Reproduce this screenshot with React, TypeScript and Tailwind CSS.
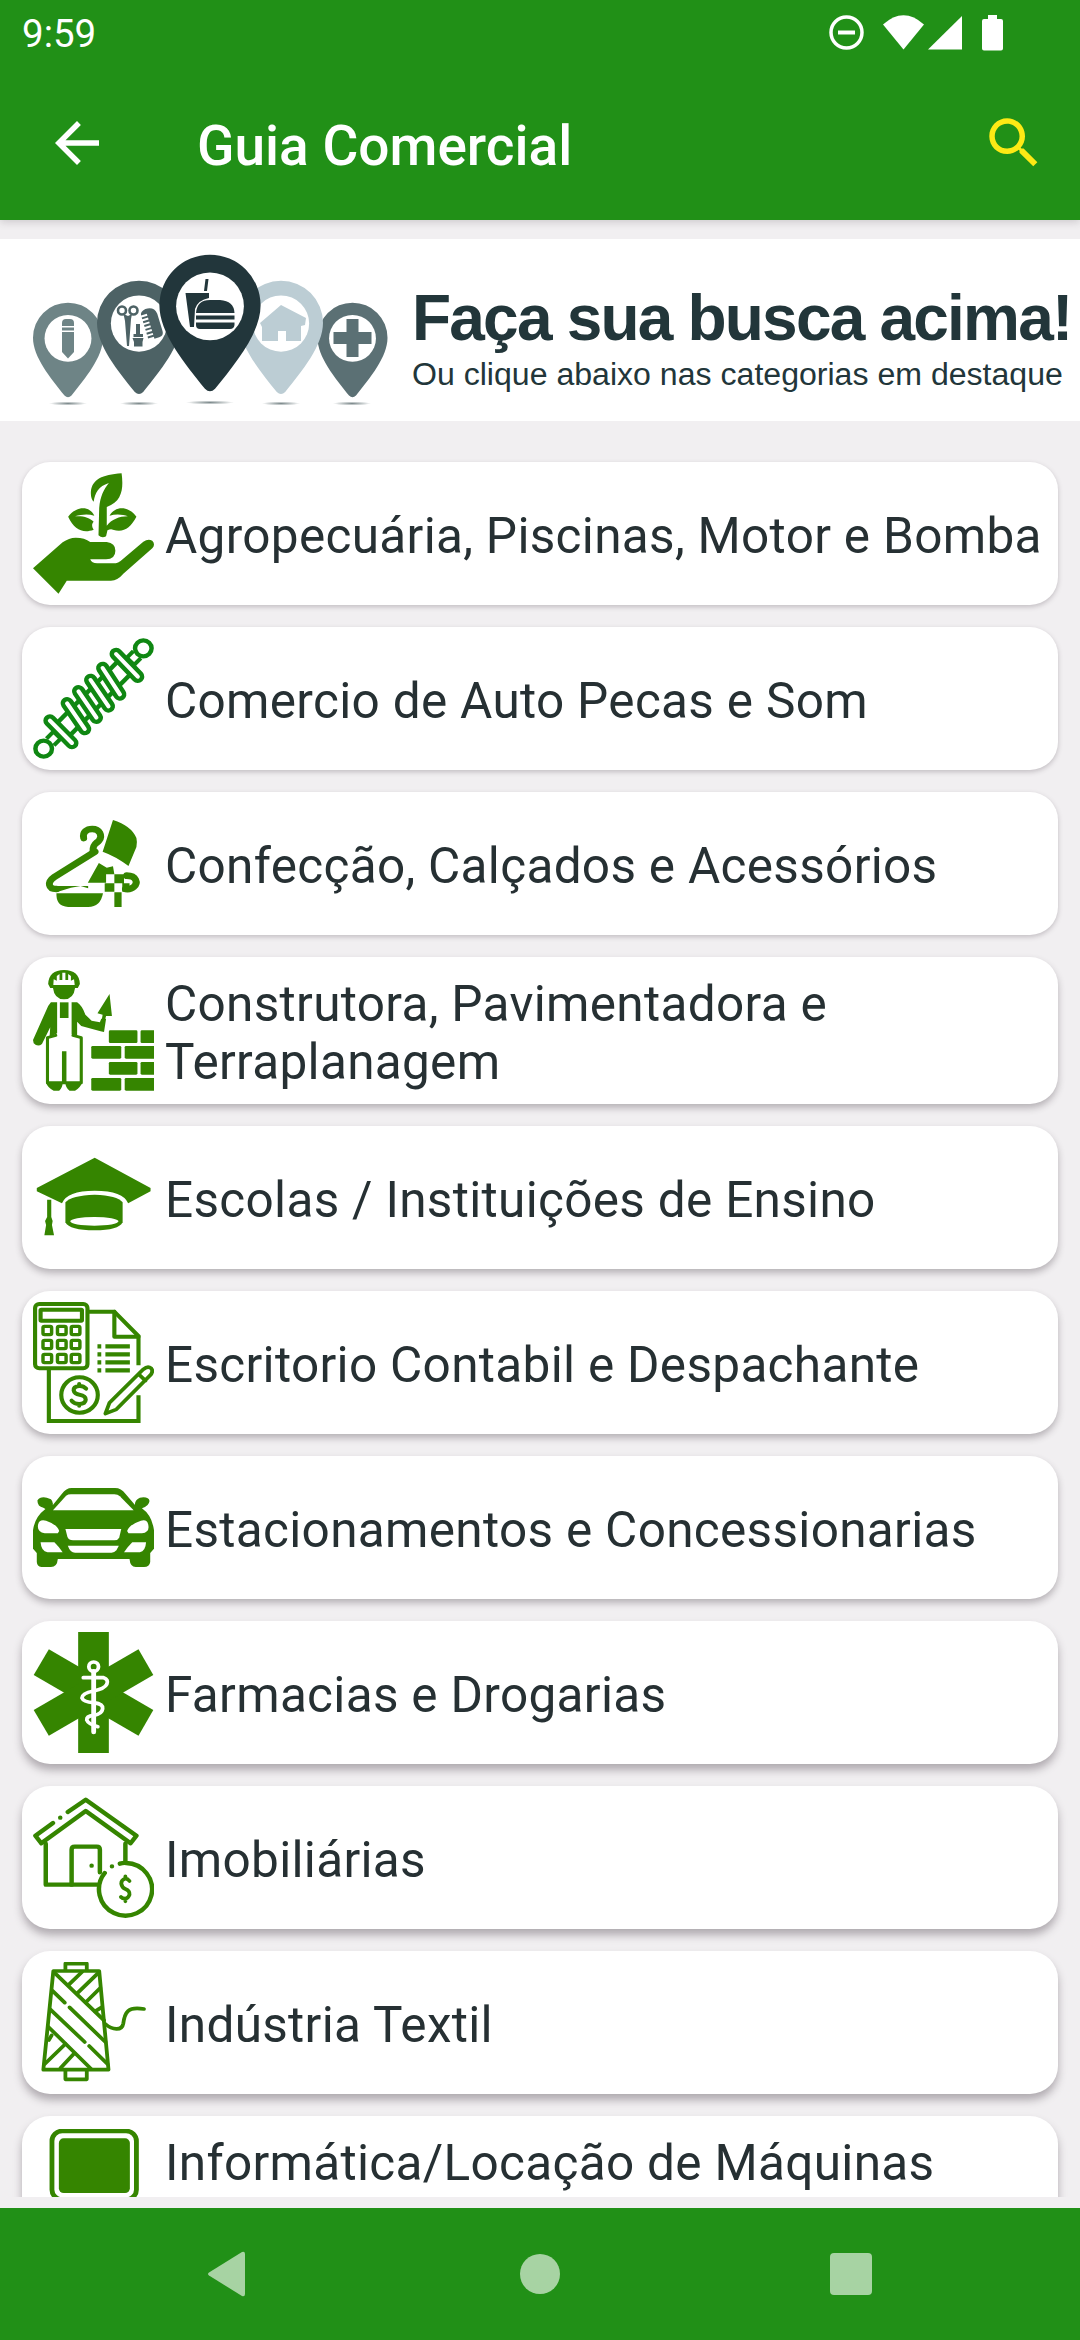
import type { ReactNode } from 'react';

interface Category {
  name: string;
  icon: ReactNode;
  twoLines?: boolean;
  shadow: string;
}

const SHADOW_SM = 'shadow-[0_2px_5px_rgba(60,50,60,0.26)]';
const SHADOW_MD = 'shadow-[0_4px_7px_rgba(60,50,60,0.32)]';
const SHADOW_LG = 'shadow-[0_6px_9px_rgba(60,50,60,0.36)]';

function Icon({ children }: { children: ReactNode }) {
  return (
    <svg
      className="size-[121px] shrink-0 text-[#358500]"
      viewBox="0 0 351 363"
      preserveAspectRatio="none"
      fill="currentColor"
      strokeLinecap="round"
      strokeLinejoin="round"
    >
      {children}
    </svg>
  );
}

const HandPlant = () => (
  <Icon>
    <path d="M0 286 86 208Q104 194 124 194 150 194 166 207H214Q239 210 239 233 239 258 212 259H166Q170 271 186 271H240Q247 270 254 264L320 206Q334 196 346 203 356 214 346 226L262 302Q246 322 226 323H98L74 362Z" />
    <path d="M257 1C200 5 172 20 168 55 167 70 170 80 176 86 180 60 190 40 220 30 205 50 195 70 192 105L190 187Q200 197 212 190L216 172Q226 166 232 170C262 180 282 165 300 131 278 98 238 97 222 128 240 122 262 124 275 130 250 130 228 140 214 158V102C262 85 262 40 257 1Z" />
    <path d="M102 131C125 98 165 97 178 128 160 122 140 124 122 130 145 128 165 134 176 146 170 152 170 160 176 170 145 182 120 170 102 131Z" />
  </Icon>
);

const COILS = [
  'M241 48 304 116',
  'M202 90 252 169',
  'M167 126 219 205',
  'M132 160 184 239',
  'M99 196 150 273',
  'M49 248 113 315',
];

const ShockAbsorber = () => (
  <Icon>
    <g fill="none" className="stroke-[#0f8712]">
      <path d="M50 312 302 50" strokeWidth="42" strokeLinecap="butt" />
      <path d="M50 312 302 50" strokeWidth="18" stroke="#fff" strokeLinecap="butt" />
      <path d="M92 270 262 92" strokeWidth="66" strokeLinecap="butt" />
      <path d="M92 270 262 92" strokeWidth="40" stroke="#fff" strokeLinecap="butt" />
      <path d="M275 62 290 77M62 284 77 299" strokeWidth="11" />
      {COILS.map((d) => (
        <g key={d}>
          <path d={d} strokeWidth="38" />
          <path d={d} strokeWidth="12" className="stroke-white" />
        </g>
      ))}
      <circle cx="320" cy="31" r="24" strokeWidth="13" fill="#fff" />
      <circle cx="31" cy="332" r="24" strokeWidth="13" fill="#fff" />
    </g>
  </Icon>
);

const Clothes = () => (
  <Icon>
    <g fill="none" stroke="currentColor" strokeWidth="20">
      <path d="M147 105C143 88 155 78 172 78 194 78 202 98 192 112 185 122 172 122 174 146" />
      <path d="M180 146 62 222C40 238 44 258 68 258" />
      <path d="M272 218C300 218 306 240 292 252Q284 260 268 258" />
    </g>
    <path d="M68 249H160V256L138 249 110 254 70 267Z" />
    <path d="M232 51Q285 68 300 105 303 118 300 132L277 189Q240 160 202 146Z" />
    <path d="M191 180 214 194 232 190 236 214H212V239H159Z" />
    <path d="M236 214H264V241H236ZM208 241H236V266H208ZM259 241H280V266H259ZM236 268H257V312H236Z" />
    <path d="M68 271H203Q196 312 160 312H102Q66 310 68 271Z" />
  </Icon>
);

const Builder = () => (
  <Icon>
    <path d="M44 42Q46 0 90 0 134 0 136 42L130 54H122Q118 88 90 88 62 88 58 54H50Z" />
    <path d="M59 45 60 28 69 32V18L77 12V30H85V8H94V30H102V12L110 18V32L119 28 121 45Z" fill="#fff" />
    <path d="M52 97H70V190L48 202 50 172 26 222Q14 232 2 220L0 210 44 108Z" />
    <path d="M112 97H128Q142 106 152 134L170 152 194 157 198 146H212L206 186 196 184 140 168 128 155V200L112 192Z" />
    <path d="M78 97H103V144H78Z" />
    <path d="M222 72 229 138 212 138 206 160 198 158 202 134 187 130Z" />
    <path d="M66 196 42 203V338H140V203L116 196" fill="none" stroke="currentColor" strokeWidth="9" />
    <path d="M84 244H97V338H84ZM38 338H86Q86 352 76 362H60Q42 352 38 338ZM94 338H142Q138 352 122 362H106Q94 352 94 338Z" />
    {[181, 276].map((y) => (
      <g key={y}>
        <rect x="220" y={y} width="83" height="38" rx="4" />
        <path d={`M316 ${y}h35v38h-35q-4 0-4-4v-30q0-4 4-4z`} />
      </g>
    ))}
    {[228, 324].map((y) => (
      <g key={y}>
        <rect x="169" y={y} width="87" height="38" rx="4" />
        <path d={`M270 ${y}h81v38h-81q-4 0-4-4v-30q0-4 4-4z`} />
      </g>
    ))}
  </Icon>
);

const GraduationCap = () => (
  <Icon>
    <path d="M179 62 341 153V163L276 199Q262 161 179 161 98 161 84 199L11 163V153Z" />
    <path d="M94 196Q112 175 179 173 244 175 260 196V256Q248 280 179 280 106 280 94 256Z" />
    <ellipse cx="178" cy="253" rx="70" ry="13" fill="#fff" />
    <path d="M41 188H53V240L57 252 55 264 61 295H33L38 264 35 252 41 240Z" />
  </Icon>
);

const Accounting = () => (
  <Icon>
    <g fill="none" stroke="currentColor" strokeWidth="12">
      <rect x="6" y="6" width="152" height="193" rx="12" />
      <rect x="22" y="23" width="120" height="33" rx="2" />
      <path d="M160 29H236L306 102V190M46 200V357H306V280" strokeLinecap="butt" strokeLinejoin="miter" />
      <path d="M236 29V104H306" />
      <circle cx="135" cy="279" r="53" />
      <path d="M154 260Q146 251 134 252 117 254 118 265 120 276 135 278 153 281 153 293 152 306 134 306 120 306 112 296M134 246V252M134 306V311" />
      <path d="M210 335 222 302 320 202Q333 190 343 199 350 208 340 220L242 322ZM306 216 326 236" strokeWidth="11" />
      {[85, 127, 169].map((y) =>
        [41, 83, 123].map((x) => (
          <rect key={`${x}-${y}`} x={x - 12} y={y - 12} width="25" height="25" rx="4" strokeWidth="10" />
        )),
      )}
      {[133, 157, 181, 205].map((y) => (
        <path key={y} d={`M187 ${y}h11M210 ${y}h71`} strokeLinecap="butt" strokeWidth="13" />
      ))}
    </g>
  </Icon>
);

const Car = () => (
  <Icon>
    <path d="M0 190Q5 150 36 126L30 122Q12 118 13 100 20 88 40 92L52 97Q60 106 57 115L84 80Q96 63 112 63H238Q256 63 268 80L296 114Q294 100 310 92 336 88 338 102 336 118 316 124 345 145 351 190V245L340 258V285Q338 300 322 300H298Q282 300 280 276H72Q70 300 52 300H24Q12 298 11 285V258L0 245Z" />
    <g fill="#fff">
      <path d="M58 130 96 86Q102 82 110 82H236Q246 82 252 88L292 130Z" />
      <path d="M15 172Q18 156 38 161 70 172 76 192L72 199H34Q10 195 15 172Z" />
      <path d="M334 172Q331 156 313 161 280 172 273 192L277 199H316Q340 195 334 172Z" />
      <path d="M94 186H256L250 212Q246 220 236 220H116Q104 220 100 210Z" />
      <path d="M101 236H249L242 250Q236 257 228 257H122Q108 257 101 236Z" />
      <path d="M22 226H62Q76 240 86 256H42Q24 254 22 226Z" />
      <path d="M328 226H288Q274 240 264 256H310Q326 254 328 226Z" />
    </g>
  </Icon>
);

const StarOfLife = () => (
  <Icon>
    <path d="M131 0H220V363H131Z" />
    <path d="M46 52 349 234 306 311 2 129Z" />
    <path d="M306 52 349 129 46 311 2 234Z" />
    <g fill="none" stroke="#fff" strokeWidth="11">
      <circle cx="176" cy="104" r="14" />
      <path d="M176 118V300" strokeWidth="14" />
      <path d="M146 137H205Q220 142 214 157 208 170 176 177 142 184 142 198 146 210 176 212 204 216 202 230 200 246 176 250 155 252 156 264 160 276 188 284" />
    </g>
  </Icon>
);

const RealEstate = () => (
  <Icon>
    <g fill="none" stroke="currentColor" strokeWidth="13">
      <path d="M101 45 153 8 300 116 283 139 153 42 24 139 7 116 58 78M79 62h.1" />
      <path d="M37 140V263H186M268 140V192" />
      <path d="M112 263V158Q112 149 121 149H185Q194 149 194 158V226" />
      <path d="M170 206h.1M229 208h.1" />
      <path d="M252 200Q262 197 270 198A77 79 0 1 1 208 228" />
      <path d="M280 252Q274 244 267 245 256 248 256 260 258 272 268 276 281 281 280 293 276 304 268 305 259 305 255 300M268 238V245M268 306V313" strokeWidth="11" />
    </g>
  </Icon>
);

const Spool = () => (
  <Icon>
    <g fill="none" stroke="currentColor" strokeWidth="11">
      <path d="M59 27H192L219 323H30ZM94 25V5H156V25M94 325V352H156V325" />
      <path d="M62 32 206 175M56 86 92 122M106 136 150 240" stroke="none" />
      <path d="M62 32 206 175M56 86 92 122M106 136 210 240M50 142 150 240M163 252 216 306M44 194 168 320" />
      <path d="M142 30 104 68M188 34 128 94M195 78 154 120M199 136 180 148M54 220 46 234M94 246 34 306M120 274 80 318" />
      <path d="M210 186C230 204 258 208 262 184 266 152 274 132 322 141" />
    </g>
  </Icon>
);

const Computer = () => (
  <Icon>
    <rect x="55" y="6" width="245" height="206" rx="30" fill="none" stroke="currentColor" strokeWidth="14" />
    <rect x="75" y="28" width="206" height="164" rx="14" />
  </Icon>
);

const categories: Category[] = [
  { name: 'Agropecuária, Piscinas, Motor e Bomba', icon: <HandPlant />, shadow: SHADOW_SM },
  { name: 'Comercio de Auto Pecas e Som', icon: <ShockAbsorber />, shadow: SHADOW_SM },
  { name: 'Confecção, Calçados e Acessórios', icon: <Clothes />, shadow: SHADOW_SM },
  { name: 'Construtora, Pavimentadora e Terraplanagem', icon: <Builder />, shadow: SHADOW_MD, twoLines: true },
  { name: 'Escolas / Instituições de Ensino', icon: <GraduationCap />, shadow: SHADOW_MD },
  { name: 'Escritorio Contabil e Despachante', icon: <Accounting />, shadow: SHADOW_MD },
  { name: 'Estacionamentos e Concessionarias', icon: <Car />, shadow: SHADOW_MD },
  { name: 'Farmacias e Drogarias', icon: <StarOfLife />, shadow: SHADOW_LG },
  { name: 'Imobiliárias', icon: <RealEstate />, shadow: SHADOW_LG },
  { name: 'Indústria Textil', icon: <Spool />, shadow: SHADOW_LG },
  { name: 'Informática/Locação de Máquinas', icon: <Computer />, shadow: SHADOW_LG, twoLines: true },
];

interface PinProps {
  x: number;
  top: number;
  r: number;
  color: string;
}

function Pin({ x, top, r, color }: PinProps) {
  return (
    <g transform={`translate(${x} ${top}) scale(${r})`}>
      <path d="M-1 1A1 1 0 0 1 1 1C1 1.55 .5 2.15 .1 2.65Q0 2.75-.1 2.65C-.5 2.15-1 1.55-1 1Z" fill={color} />
      <circle cx="0" cy="1.02" r=".67" fill="#fff" />
    </g>
  );
}

function BannerPins() {
  return (
    <svg className="h-[182px] w-[400px] shrink-0" viewBox="0 0 400 182">
      <defs>
        <radialGradient id="ground">
          <stop offset="0" stopColor="#7d8a8c" />
          <stop offset="1" stopColor="#fff" />
        </radialGradient>
      </defs>
      {[68, 139, 210, 281, 352].map((x, i) => (
        <ellipse key={x} cx={x} cy={i === 2 ? 163.5 : 164.5} rx={i === 2 ? 24 : 19} ry="2" fill="url(#ground)" />
      ))}
      <Pin x={68} top={63.7} r={35} color="#6e8486" />
      <Pin x={352.5} top={63.7} r={35} color="#5b7074" />
      <Pin x={139} top={41.7} r={42} color="#4d6265" />
      <Pin x={281} top={41.7} r={42} color="#bccdd4" />

      {/* pencil */}
      <path
        d="M62 84Q62 80 66 80H70Q74 80 74 84V87H62ZM62 88.500H74V91.500H62ZM62 93H74V113L68 119.500 62 113Z"
        fill="#6e8486"
      />

      {/* scissors, nail polish and comb */}
      <g fill="none" stroke="#4d6265" strokeWidth="2.6">
        <circle cx="122" cy="71.500" r="4" />
        <circle cx="133.500" cy="71.500" r="4" />
      </g>
      <g fill="#4d6265">
        <path d="M123.500 75 128 77 132 75 131 80 129 107H127L125 82ZM136 85H140V95H143V98H133.500V95H136ZM132.500 99H143.500L142.500 103H134ZM134 103H142.500V107.500H134Z" />
        <g transform="rotate(-17 151 85)">
          <path d="M150 69Q159 69 160 77V95Q160 100 155 100H150V98H144V96H150V94H144V92H150V90H144V88H150V86H144V84H150V82H144V80H150V78H144V76H150V74H144Q144 70 150 69Z" />
        </g>
      </g>

      {/* house */}
      <path d="M260 84 281 66 306 79 305 86 301 87V102H286V92H278V102H262V88Z" fill="#bccdd4" />

      {/* cross */}
      <path d="M346.500 80H358.500V93H371.500V105H358.500V118H346.500V105H333.500V93H346.500Z" fill="#5b7074" />

      {/* drink and burger on the main pin */}
      <Pin x={210} top={15.7} r={50.6} color="#22363b" />
      <g fill="#22363b">
        <path d="M205.500 40H208.500L207 52H204ZM185.500 54H209V59Q198 61 195 70L194 88H190Z" />
        <path d="M196 74Q197 61 210 61H220Q234 62 234.500 74ZM196 76.500H234.500V80.500H196ZM196 83.500H234.500V86Q234 90 230 90H200Q196 90 196 86Z" />
      </g>
    </svg>
  );
}

function StatusBar() {
  return (
    <div className="flex h-[66px] items-center pl-[22px] pr-[75px] text-white">
      <span className="mt-0.5 text-[38.5px] leading-none">9:59</span>
      <div className="ml-auto flex items-center">
        <svg className="h-[36px] w-[176px]" viewBox="829 15 176 36" fill="currentColor">
          <circle cx="846.500" cy="32.500" r="15.500" fill="none" stroke="currentColor" strokeWidth="3.500" />
          <path d="M838 30.500H855V34.500H838Z" />
          <path d="M883 24.500Q903.500 6 924 24.500L903.500 49.500Z" />
          <path d="M962 16V49.500H928Z" />
          <path d="M988 15H997V19H1001Q1003 19 1003 21V48.500Q1003 50.500 1001 50.500H984Q982 50.500 982 48.500V21Q982 19 984 19H988Z" />
        </svg>
      </div>
    </div>
  );
}

function AppBar() {
  return (
    <div className="flex h-[154px] items-center pl-11 pr-[33px]">
      <button type="button" aria-label="Voltar">
        <svg className="size-[66px] text-white" viewBox="0 0 24 24" fill="currentColor">
          <path d="M20 11H7.830l5.590-5.590L12 4l-8 8 8 8 1.410-1.410L7.830 13H20v-2z" />
        </svg>
      </button>
      <h1 className="ml-[87px] mt-1.5 text-[55px] font-medium leading-none text-white">Guia Comercial</h1>
      <button type="button" aria-label="Buscar" className="ml-auto">
        <svg className="size-[66px] text-[#fde915]" viewBox="0 0 24 24" fill="currentColor">
          <path d="M15.500 14h-.79l-.28-.27C15.410 12.590 16 11.110 16 9.500 16 5.910 13.090 3 9.500 3S3 5.910 3 9.500 5.910 16 9.500 16c1.610 0 3.090-.59 4.230-1.570l.27.28v.79l5 4.990L20.490 19l-4.990-5zm-6 0C7.010 14 5 11.990 5 9.500S7.010 5 9.500 5 14 7.010 14 9.500 11.990 14 9.500 14z" />
        </svg>
      </button>
    </div>
  );
}

function NavigationBar() {
  return (
    <nav className="flex h-[132px] items-center bg-[#219017] pl-[207px]">
      <svg className="h-[46px] w-[38px]" viewBox="0 0 38 46">
        <path d="M2 21.500 35 1Q38 0 38 3V43Q38 46 35 45L2 24.500Q0 23 2 21.500Z" fill="#a7d3a3" />
      </svg>
      <div className="ml-[275px] size-10 rounded-full bg-[#a7d3a3]" />
      <div className="ml-[270px] size-[42px] rounded-[4px] bg-[#a7d3a3]" />
    </nav>
  );
}

export default function App() {
  return (
    <div className="flex h-[2340px] w-[1080px] flex-col overflow-hidden bg-[#f1eff1] font-[Roboto,sans-serif]">
      <header className="z-10 bg-[#219017] shadow-[0_2px_8px_rgba(60,50,60,0.2)]">
        <StatusBar />
        <AppBar />
      </header>

      <section className="mt-[19px] flex h-[182px] shrink-0 bg-white font-['Liberation_Sans',Arial,sans-serif] text-[#22363a]">
        <BannerPins />
        <div className="flex flex-col whitespace-nowrap pl-[12px] pt-[43px]">
          <p className="text-[64px] font-bold leading-[72px] tracking-[-1.8px]">Faça sua busca acima!</p>
          <p className="text-[32.1px] leading-[40px]">Ou clique abaixo nas categorias em destaque</p>
        </div>
      </section>

      <main className="flex-1 overflow-hidden px-[22px] pt-[41px]">
        <ul className="flex flex-col gap-[22px]">
          {categories.map((category) => (
            <li
              key={category.name}
              className={`flex shrink-0 items-center rounded-[28px] bg-white px-[11px] ${category.shadow} ${
                category.twoLines ? 'h-[147px]' : 'h-[143px]'
              }`}
            >
              {category.icon}
              <span
                className={`ml-[11px] mt-1 text-[49.5px] leading-[58px] tracking-[0.31px] text-[#263033] ${
                  category.twoLines ? 'h-[116px] max-w-[800px]' : 'whitespace-nowrap'
                }`}
              >
                {category.name}
              </span>
            </li>
          ))}
        </ul>
      </main>

      <div className="h-[11px] shrink-0 bg-[#f1eff1]" />
      <NavigationBar />
    </div>
  );
}
